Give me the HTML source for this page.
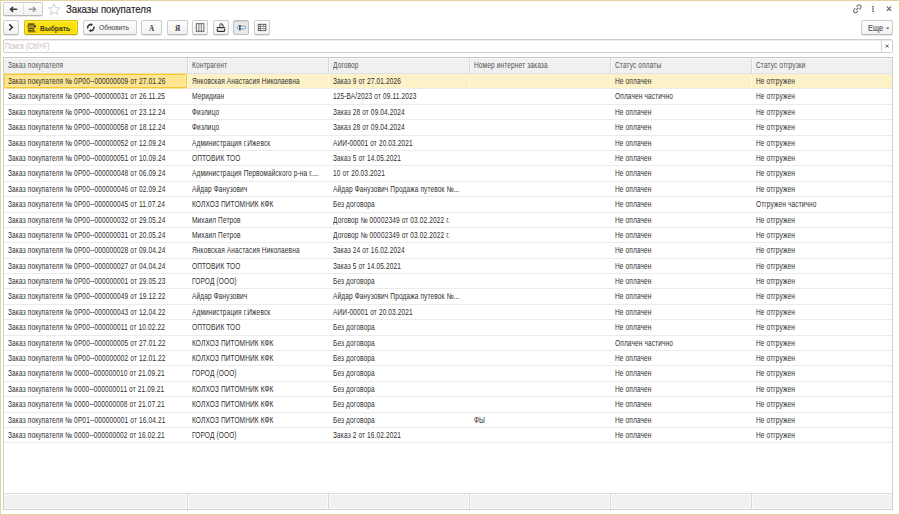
<!DOCTYPE html>
<html><head><meta charset="utf-8"><style>*{margin:0;padding:0;box-sizing:border-box}
html,body{width:900px;height:515px;overflow:hidden;background:#fff}
body{font-family:"Liberation Sans",sans-serif;color:#333;position:relative}
#win{position:absolute;left:0;top:0;width:900px;height:515px;background:#fff}
#frame{position:absolute;left:0;top:0;width:900px;height:515px;border:1px solid #e0d5a0;pointer-events:none}
.abs{position:absolute}
svg{position:absolute;overflow:visible}
.btn{position:absolute;border:1px solid #cdcdcd;border-bottom-color:#b9b9b9;border-radius:2px;background:linear-gradient(#fdfdfd,#f1f1f1);box-shadow:0 1px 0 rgba(0,0,0,0.08)}
.title{position:absolute;left:65.5px;top:1.8px;font-size:10.6px;line-height:14px;color:#222;white-space:nowrap}
.title span{display:inline-block;transform:scaleX(0.91);transform-origin:0 0;-webkit-text-stroke:0.15px currentColor}
.bt{position:absolute;font-size:8.2px;white-space:nowrap;line-height:10px}
.bt span,.ph span{display:inline-block;transform:scaleX(0.83);transform-origin:0 0;-webkit-text-stroke:0.1px currentColor}
#search{position:absolute;left:3px;top:39px;width:890px;height:14px;border:1px solid #cfcfcf;border-radius:2px;background:#fff;box-shadow:inset 0 1px 0 #ececec}
#search .ph{position:absolute;left:1.3px;top:1.5px;font-size:8.2px;color:#d2c4c4;line-height:10px}
#search .ph span{transform:scaleX(0.84)}
#search .x{position:absolute;right:0;top:0;width:11px;height:12px;border-left:1px solid #d5d5d5}
#grid{position:absolute;left:3px;top:57px;width:890px;height:453px;border:1px solid #d0d0d0;border-top-color:#c6c6c6;background:#fff;overflow:hidden}
#hdr{position:absolute;left:0;top:0;width:888px;height:16px;background:#f0f0f0;border-bottom:1px solid #dde3ec;box-shadow:inset 0 1px 0 #fafafa}
.hc{position:absolute;top:0;height:15px;border-left:1px solid #d9d9d9;box-shadow:inset 1px 0 0 #fafafa;font-size:8px;letter-spacing:-0.45px;color:#505050;padding-left:4px;line-height:15px;white-space:nowrap}
.hc:first-child{border-left:none}
.row{position:absolute;left:0;width:888px}
.rl{position:absolute;left:0;width:888px;height:1px;background:#ececec}
.row.sel{background:#fdf1c7}
.c{position:absolute;top:0;height:14px;font-size:8px;letter-spacing:-0.45px;color:#2e2e2e;padding-left:4.8px;line-height:16px;white-space:nowrap;overflow:hidden}
.row.sel .c{box-shadow:inset 1px 0 0 #fff8e2}
.row.sel .c:first-child{box-shadow:none}
#cur{position:absolute;left:0;top:16px;width:183px;height:14px;border:1px solid #fac627;border-radius:1.5px;background:#fde590;box-shadow:0 0 0 0.5px #fbd75a,inset 0 0 0 1px #fde9a4}
#foot{position:absolute;left:0;bottom:0;width:888px;height:16px;background:#f1f1f1;border-top:1px solid #dcdcdc;box-shadow:inset 0 1px 0 #fafafa,inset 0 -1px 0 #fafafa}
.fc{position:absolute;top:0;height:15px;border-left:1px solid #d9d9d9;box-shadow:inset 1px 0 0 #fafafa,-1px 0 0 #fafafa}
.fc:first-child{border-left:none}
#cur{z-index:1}
.c{z-index:2}
.c span,.hc span{display:inline-block;transform:scaleX(0.8);transform-origin:0 0;letter-spacing:0.15px;position:relative;top:0px}
.c,.hc{font-size:8.2px}
.ybtn{background:linear-gradient(#fde31c,#f9db00);border-color:#dcc000 #d8bb00 #c2a600;box-shadow:inset 0 0 0 1px rgba(255,248,110,0.55),0 1px 0 rgba(0,0,0,0.08)}
.pressed{background:#e9e9e9;border-color:#c0c0c0;box-shadow:inset 0 1px 1px rgba(0,0,0,0.12)}
.hc span{top:-0.3px}
.hc:first-child{box-shadow:none}
.hc:first-child span{left:1px}
</style></head>
<body><div id="win"><!-- nav group -->
<div class="btn" style="left:3px;top:2px;width:39.5px;height:14px"></div>
<div class="abs" style="left:22.5px;top:3px;width:1px;height:12px;background:#e2e2e2"></div>
<svg style="left:0;top:0" width="60" height="18" viewBox="0 0 60 18">
  <path d="M10.4 9.3 L12.7 7.2 M10.4 9.3 L12.7 11.4 M10.6 9.3 H16.6" stroke="#3c3c3c" stroke-width="1.5" fill="none" stroke-linecap="round"/>
  <path d="M35.6 9.3 L33.3 7.2 M35.6 9.3 L33.3 11.4 M35.4 9.3 H29.2" stroke="#9a9a9a" stroke-width="1.4" fill="none" stroke-linecap="round"/>
  <path d="M54.2 3.8 L55.8 7.7 L59.9 7.9 L56.7 10.5 L57.8 14.5 L54.2 12.2 L50.6 14.5 L51.7 10.5 L48.5 7.9 L52.6 7.7 Z" stroke="#c5ccd4" stroke-width="0.9" fill="none" stroke-linejoin="round"/>
</svg>
<div class="title"><span>Заказы покупателя</span></div>
<!-- title icons -->
<svg style="left:848px;top:2px" width="48" height="14" viewBox="0 0 48 14">
  <g stroke="#707070" stroke-width="1.1" fill="none" stroke-linecap="round">
    <path d="M-1.3 -1.9 H0 A1.9 1.9 0 0 1 0 1.9 H-1.3" transform="translate(11.2,4.8) rotate(-45)"/>
    <path d="M1.3 -1.9 H0 A1.9 1.9 0 0 0 0 1.9 H1.3" transform="translate(7.4,8.7) rotate(-45)"/>
    <path d="M8.5 7.6 L10.1 6.0"/>
  </g>
  <g fill="#6a6a6a"><rect x="24.2" y="4" width="1.7" height="1.5"/><rect x="24.2" y="6.3" width="1.7" height="1.5"/><rect x="24.2" y="8.6" width="1.7" height="1.5"/></g>
  <path d="M39.2 4.9 L42.8 8.5 M42.8 4.9 L39.2 8.5" stroke="#6a6a6a" stroke-width="1.1" stroke-linecap="round"/>
</svg>
<!-- toolbar -->
<div class="btn" style="left:3px;top:20px;width:16px;height:15px"></div>
<svg style="left:3px;top:20px" width="16" height="15" viewBox="0 0 16 15"><path d="M6.3 4.4 L9.3 7.3 L6.3 10.2" stroke="#2a2a2a" stroke-width="1.5" fill="none"/></svg>
<div class="btn ybtn" style="left:24px;top:20px;width:54px;height:15px"></div>
<svg style="left:24px;top:20px" width="20" height="15" viewBox="0 0 20 15">
  <g fill="#6b5a10"><rect x="4" y="3.2" width="6.5" height="1.7" rx="0.5"/><rect x="3.3" y="5.2" width="7.8" height="2.2" rx="0.6"/><rect x="4" y="7.8" width="6.5" height="1.5"/><rect x="4" y="9.7" width="6.5" height="1.5"/><rect x="4" y="11.3" width="7.5" height="1"/></g>
  <rect x="4.3" y="5.7" width="5.5" height="1.1" fill="#b8a44a"/>
  <rect x="10.3" y="5.3" width="1.7" height="1.9" fill="#2b3a7a"/>
</svg>
<div class="bt" style="left:40px;top:23.6px;font-weight:bold;font-size:7.2px;color:#3d3a1e"><span style="transform:scaleX(0.94);-webkit-text-stroke:0">Выбрать</span></div>
<div class="btn" style="left:83px;top:20px;width:54px;height:15px"></div>
<svg style="left:83px;top:20px" width="16" height="15" viewBox="0 0 16 15">
  <g stroke="#2e2e2e" stroke-width="1.5" fill="none">
    <path d="M8.6 4.5 A3.2 3.2 0 0 0 4.8 8.6"/>
    <path d="M10.9 6.6 A3.2 3.2 0 0 1 7 10.7"/>
  </g>
  <path d="M7.6 3.3 L10 4.5 L8 6.2 Z" fill="#2e2e2e"/>
  <path d="M8 9.2 L5.6 10.4 L7.8 12 Z" fill="#2e2e2e"/>
</svg>
<div class="bt" style="left:98.7px;top:23.4px;color:#555;font-size:7.6px"><span style="transform:scaleX(0.87)">Обновить</span></div>
<div class="btn" style="left:141px;top:20px;width:21px;height:15px"></div>
<div class="abs" style="left:141px;top:20.8px;width:21px;height:15px;font-family:'Liberation Serif',serif;font-weight:bold;font-size:7.2px;text-align:center;line-height:17.2px;color:#3a3a3a">A</div>
<div class="btn" style="left:167px;top:20px;width:21px;height:15px"></div>
<div class="abs" style="left:167px;top:20.8px;width:21px;height:15px;font-family:'Liberation Serif',serif;font-weight:bold;font-size:7.2px;text-align:center;line-height:17.2px;color:#3a3a3a">Я</div>
<div class="btn" style="left:192px;top:20px;width:16px;height:15px"></div>
<svg style="left:192px;top:20px" width="16" height="15" viewBox="0 0 16 15">
  <rect x="4.3" y="3.7" width="7.6" height="7.6" stroke="#5a5a5a" stroke-width="0.9" fill="none"/>
  <path d="M6.9 3.7 V11.3 M9.3 3.7 V11.3" stroke="#5a5a5a" stroke-width="0.8"/>
</svg>
<div class="btn" style="left:213px;top:20px;width:16px;height:15px"></div>
<svg style="left:213px;top:20px" width="16" height="15" viewBox="0 0 16 15">
  <path d="M6.9 6.9 V4.3 Q6.9 3.8 7.4 3.8 H8.9 L10.1 5.0 V6.9" stroke="#3a3a3a" stroke-width="0.9" fill="#fff"/>
  <path d="M8.8 3.9 V5.2 H10.1" stroke="#3a3a3a" stroke-width="0.7" fill="none"/>
  <rect x="3.6" y="6.9" width="8.6" height="1.3" rx="0.5" fill="#333"/>
  <path d="M4.3 8.7 V10.4 Q4.3 11.4 5.2 11.4 H10.7 Q11.6 11.4 11.6 10.4 V8.7" stroke="#333" stroke-width="1.1" fill="none"/>
</svg>
<div class="btn pressed" style="left:233px;top:20px;width:16px;height:15px"></div>
<svg style="left:233px;top:20px" width="16" height="15" viewBox="0 0 16 15">
  <rect x="4.3" y="6.2" width="8.3" height="2.6" rx="1.3" stroke="#5d9fd6" stroke-width="1" fill="#fff"/>
  <path d="M6.9 4.9 V10.6" stroke="#333" stroke-width="1.3"/>
</svg>
<div class="btn" style="left:254px;top:20px;width:16px;height:15px"></div>
<svg style="left:254px;top:20px" width="16" height="15" viewBox="0 0 16 15">
  <rect x="4.3" y="4.3" width="7.5" height="6.3" stroke="#555" stroke-width="0.9" fill="#fff"/>
  <path d="M4.3 6.4 H11.8 M4.3 8.5 H11.8" stroke="#707070" stroke-width="0.8"/>
  <path d="M6.2 4.3 V10.6" stroke="#555" stroke-width="0.9"/>
  <path d="M9.6 4.3 V6.4" stroke="#707070" stroke-width="0.8"/>
  <path d="M9.6 6.4 V10.6" stroke="#aaa" stroke-width="0.6"/>
</svg>
<div class="btn" style="left:861px;top:20px;width:32px;height:15px"></div>
<div class="bt" style="left:868px;top:23.8px;color:#4a4a4a"><span style="transform:scaleX(0.9)">Еще</span></div>
<svg style="left:861px;top:20px" width="32" height="15" viewBox="0 0 32 15"><path d="M25 7.6 H28.4 L26.7 9.3 Z" fill="#555"/></svg>
<div id="search"><span class="ph"><span>Поиск (Ctrl+F)</span></span><span class="x"><svg style="left:-1px;top:0" width="12" height="12" viewBox="0 0 12 12"><path d="M4.6 4.7 L7.6 7.5 M7.6 4.7 L4.6 7.5" stroke="#555" stroke-width="0.9"/></svg></span></div>
<div id="grid"><div id="hdr"><div class="hc" style="left:-1px;width:184px"><span>Заказ покупателя</span></div><div class="hc" style="left:183px;width:141px"><span>Контрагент</span></div><div class="hc" style="left:324px;width:141px"><span>Договор</span></div><div class="hc" style="left:465px;width:141px"><span>Номер интернет заказа</span></div><div class="hc" style="left:606px;width:141px"><span>Статус оплаты</span></div><div class="hc" style="left:747px;width:141px"><span>Статус отгрузки</span></div></div><div class="row sel" style="top:16px;height:14px"><div class="c" style="left:-1px;width:184px"><span>Заказ покупателя № 0Р00--000000009 от 27.01.26</span></div><div class="c" style="left:183px;width:141px"><span>Янковская Анастасия Николаевна</span></div><div class="c" style="left:324px;width:141px"><span>Заказ 9 от 27.01.2026</span></div><div class="c" style="left:465px;width:141px"><span></span></div><div class="c" style="left:606px;width:141px"><span>Не оплачен</span></div><div class="c" style="left:747px;width:141px"><span>Не отгружен</span></div></div><div id="cur"></div><div class="rl" style="top:30px"></div><div class="row" style="top:31px;height:15px"><div class="c" style="left:-1px;width:184px"><span>Заказ покупателя № 0Р00--000000031 от 26.11.25</span></div><div class="c" style="left:183px;width:141px"><span>Меридиан</span></div><div class="c" style="left:324px;width:141px"><span>125-ВА/2023 от 09.11.2023</span></div><div class="c" style="left:465px;width:141px"><span></span></div><div class="c" style="left:606px;width:141px"><span>Оплачен частично</span></div><div class="c" style="left:747px;width:141px"><span>Не отгружен</span></div></div><div class="rl" style="top:46px"></div><div class="row" style="top:47px;height:14px"><div class="c" style="left:-1px;width:184px"><span>Заказ покупателя № 0Р00--000000061 от 23.12.24</span></div><div class="c" style="left:183px;width:141px"><span>Физлицо</span></div><div class="c" style="left:324px;width:141px"><span>Заказ 28 от 09.04.2024</span></div><div class="c" style="left:465px;width:141px"><span></span></div><div class="c" style="left:606px;width:141px"><span>Не оплачен</span></div><div class="c" style="left:747px;width:141px"><span>Не отгружен</span></div></div><div class="rl" style="top:61px"></div><div class="row" style="top:62px;height:15px"><div class="c" style="left:-1px;width:184px"><span>Заказ покупателя № 0Р00--000000058 от 18.12.24</span></div><div class="c" style="left:183px;width:141px"><span>Физлицо</span></div><div class="c" style="left:324px;width:141px"><span>Заказ 28 от 09.04.2024</span></div><div class="c" style="left:465px;width:141px"><span></span></div><div class="c" style="left:606px;width:141px"><span>Не оплачен</span></div><div class="c" style="left:747px;width:141px"><span>Не отгружен</span></div></div><div class="rl" style="top:77px"></div><div class="row" style="top:78px;height:14px"><div class="c" style="left:-1px;width:184px"><span>Заказ покупателя № 0Р00--000000052 от 12.09.24</span></div><div class="c" style="left:183px;width:141px"><span>Администрация г.Ижевск</span></div><div class="c" style="left:324px;width:141px"><span>АИИ-00001 от 20.03.2021</span></div><div class="c" style="left:465px;width:141px"><span></span></div><div class="c" style="left:606px;width:141px"><span>Не оплачен</span></div><div class="c" style="left:747px;width:141px"><span>Не отгружен</span></div></div><div class="rl" style="top:92px"></div><div class="row" style="top:93px;height:14px"><div class="c" style="left:-1px;width:184px"><span>Заказ покупателя № 0Р00--000000051 от 10.09.24</span></div><div class="c" style="left:183px;width:141px"><span>ОПТОВИК ТОО</span></div><div class="c" style="left:324px;width:141px"><span>Заказ 5 от 14.05.2021</span></div><div class="c" style="left:465px;width:141px"><span></span></div><div class="c" style="left:606px;width:141px"><span>Не оплачен</span></div><div class="c" style="left:747px;width:141px"><span>Не отгружен</span></div></div><div class="rl" style="top:107px"></div><div class="row" style="top:108px;height:15px"><div class="c" style="left:-1px;width:184px"><span>Заказ покупателя № 0Р00--000000048 от 06.09.24</span></div><div class="c" style="left:183px;width:141px"><span>Администрация Первомайского р-на г....</span></div><div class="c" style="left:324px;width:141px"><span>10 от 20.03.2021</span></div><div class="c" style="left:465px;width:141px"><span></span></div><div class="c" style="left:606px;width:141px"><span>Не оплачен</span></div><div class="c" style="left:747px;width:141px"><span>Не отгружен</span></div></div><div class="rl" style="top:123px"></div><div class="row" style="top:124px;height:14px"><div class="c" style="left:-1px;width:184px"><span>Заказ покупателя № 0Р00--000000046 от 02.09.24</span></div><div class="c" style="left:183px;width:141px"><span>Айдар Фанузович</span></div><div class="c" style="left:324px;width:141px"><span>Айдар Фанузович Продажа путевок №...</span></div><div class="c" style="left:465px;width:141px"><span></span></div><div class="c" style="left:606px;width:141px"><span>Не оплачен</span></div><div class="c" style="left:747px;width:141px"><span>Не отгружен</span></div></div><div class="rl" style="top:138px"></div><div class="row" style="top:139px;height:15px"><div class="c" style="left:-1px;width:184px"><span>Заказ покупателя № 0Р00--000000045 от 11.07.24</span></div><div class="c" style="left:183px;width:141px"><span>КОЛХОЗ ПИТОМНИК КФК</span></div><div class="c" style="left:324px;width:141px"><span>Без договора</span></div><div class="c" style="left:465px;width:141px"><span></span></div><div class="c" style="left:606px;width:141px"><span>Не оплачен</span></div><div class="c" style="left:747px;width:141px"><span>Отгружен частично</span></div></div><div class="rl" style="top:154px"></div><div class="row" style="top:155px;height:14px"><div class="c" style="left:-1px;width:184px"><span>Заказ покупателя № 0Р00--000000032 от 29.05.24</span></div><div class="c" style="left:183px;width:141px"><span>Михаил Петров</span></div><div class="c" style="left:324px;width:141px"><span>Договор № 00002349 от 03.02.2022 г.</span></div><div class="c" style="left:465px;width:141px"><span></span></div><div class="c" style="left:606px;width:141px"><span>Не оплачен</span></div><div class="c" style="left:747px;width:141px"><span>Не отгружен</span></div></div><div class="rl" style="top:169px"></div><div class="row" style="top:170px;height:14px"><div class="c" style="left:-1px;width:184px"><span>Заказ покупателя № 0Р00--000000031 от 20.05.24</span></div><div class="c" style="left:183px;width:141px"><span>Михаил Петров</span></div><div class="c" style="left:324px;width:141px"><span>Договор № 00002349 от 03.02.2022 г.</span></div><div class="c" style="left:465px;width:141px"><span></span></div><div class="c" style="left:606px;width:141px"><span>Не оплачен</span></div><div class="c" style="left:747px;width:141px"><span>Не отгружен</span></div></div><div class="rl" style="top:184px"></div><div class="row" style="top:185px;height:15px"><div class="c" style="left:-1px;width:184px"><span>Заказ покупателя № 0Р00--000000028 от 09.04.24</span></div><div class="c" style="left:183px;width:141px"><span>Янковская Анастасия Николаевна</span></div><div class="c" style="left:324px;width:141px"><span>Заказ 24 от 16.02.2024</span></div><div class="c" style="left:465px;width:141px"><span></span></div><div class="c" style="left:606px;width:141px"><span>Не оплачен</span></div><div class="c" style="left:747px;width:141px"><span>Не отгружен</span></div></div><div class="rl" style="top:200px"></div><div class="row" style="top:201px;height:14px"><div class="c" style="left:-1px;width:184px"><span>Заказ покупателя № 0Р00--000000027 от 04.04.24</span></div><div class="c" style="left:183px;width:141px"><span>ОПТОВИК ТОО</span></div><div class="c" style="left:324px;width:141px"><span>Заказ 5 от 14.05.2021</span></div><div class="c" style="left:465px;width:141px"><span></span></div><div class="c" style="left:606px;width:141px"><span>Не оплачен</span></div><div class="c" style="left:747px;width:141px"><span>Не отгружен</span></div></div><div class="rl" style="top:215px"></div><div class="row" style="top:216px;height:14px"><div class="c" style="left:-1px;width:184px"><span>Заказ покупателя № 0Р00--000000001 от 29.05.23</span></div><div class="c" style="left:183px;width:141px"><span>ГОРОД (ООО)</span></div><div class="c" style="left:324px;width:141px"><span>Без договора</span></div><div class="c" style="left:465px;width:141px"><span></span></div><div class="c" style="left:606px;width:141px"><span>Не оплачен</span></div><div class="c" style="left:747px;width:141px"><span>Не отгружен</span></div></div><div class="rl" style="top:230px"></div><div class="row" style="top:231px;height:15px"><div class="c" style="left:-1px;width:184px"><span>Заказ покупателя № 0Р00--000000049 от 19.12.22</span></div><div class="c" style="left:183px;width:141px"><span>Айдар Фанузович</span></div><div class="c" style="left:324px;width:141px"><span>Айдар Фанузович Продажа путевок №...</span></div><div class="c" style="left:465px;width:141px"><span></span></div><div class="c" style="left:606px;width:141px"><span>Не оплачен</span></div><div class="c" style="left:747px;width:141px"><span>Не отгружен</span></div></div><div class="rl" style="top:246px"></div><div class="row" style="top:247px;height:14px"><div class="c" style="left:-1px;width:184px"><span>Заказ покупателя № 0Р00--000000043 от 12.04.22</span></div><div class="c" style="left:183px;width:141px"><span>Администрация г.Ижевск</span></div><div class="c" style="left:324px;width:141px"><span>АИИ-00001 от 20.03.2021</span></div><div class="c" style="left:465px;width:141px"><span></span></div><div class="c" style="left:606px;width:141px"><span>Не оплачен</span></div><div class="c" style="left:747px;width:141px"><span>Не отгружен</span></div></div><div class="rl" style="top:261px"></div><div class="row" style="top:262px;height:15px"><div class="c" style="left:-1px;width:184px"><span>Заказ покупателя № 0Р00--000000011 от 10.02.22</span></div><div class="c" style="left:183px;width:141px"><span>ОПТОВИК ТОО</span></div><div class="c" style="left:324px;width:141px"><span>Без договора</span></div><div class="c" style="left:465px;width:141px"><span></span></div><div class="c" style="left:606px;width:141px"><span>Не оплачен</span></div><div class="c" style="left:747px;width:141px"><span>Не отгружен</span></div></div><div class="rl" style="top:277px"></div><div class="row" style="top:278px;height:14px"><div class="c" style="left:-1px;width:184px"><span>Заказ покупателя № 0Р00--000000005 от 27.01.22</span></div><div class="c" style="left:183px;width:141px"><span>КОЛХОЗ ПИТОМНИК КФК</span></div><div class="c" style="left:324px;width:141px"><span>Без договора</span></div><div class="c" style="left:465px;width:141px"><span></span></div><div class="c" style="left:606px;width:141px"><span>Оплачен частично</span></div><div class="c" style="left:747px;width:141px"><span>Не отгружен</span></div></div><div class="rl" style="top:292px"></div><div class="row" style="top:293px;height:14px"><div class="c" style="left:-1px;width:184px"><span>Заказ покупателя № 0Р00--000000002 от 12.01.22</span></div><div class="c" style="left:183px;width:141px"><span>КОЛХОЗ ПИТОМНИК КФК</span></div><div class="c" style="left:324px;width:141px"><span>Без договора</span></div><div class="c" style="left:465px;width:141px"><span></span></div><div class="c" style="left:606px;width:141px"><span>Не оплачен</span></div><div class="c" style="left:747px;width:141px"><span>Не отгружен</span></div></div><div class="rl" style="top:307px"></div><div class="row" style="top:308px;height:15px"><div class="c" style="left:-1px;width:184px"><span>Заказ покупателя № 0000--000000010 от 21.09.21</span></div><div class="c" style="left:183px;width:141px"><span>ГОРОД (ООО)</span></div><div class="c" style="left:324px;width:141px"><span>Без договора</span></div><div class="c" style="left:465px;width:141px"><span></span></div><div class="c" style="left:606px;width:141px"><span>Не оплачен</span></div><div class="c" style="left:747px;width:141px"><span>Не отгружен</span></div></div><div class="rl" style="top:323px"></div><div class="row" style="top:324px;height:14px"><div class="c" style="left:-1px;width:184px"><span>Заказ покупателя № 0000--000000011 от 21.09.21</span></div><div class="c" style="left:183px;width:141px"><span>КОЛХОЗ ПИТОМНИК КФК</span></div><div class="c" style="left:324px;width:141px"><span>Без договора</span></div><div class="c" style="left:465px;width:141px"><span></span></div><div class="c" style="left:606px;width:141px"><span>Не оплачен</span></div><div class="c" style="left:747px;width:141px"><span>Не отгружен</span></div></div><div class="rl" style="top:338px"></div><div class="row" style="top:339px;height:15px"><div class="c" style="left:-1px;width:184px"><span>Заказ покупателя № 0000--000000008 от 21.07.21</span></div><div class="c" style="left:183px;width:141px"><span>КОЛХОЗ ПИТОМНИК КФК</span></div><div class="c" style="left:324px;width:141px"><span>Без договора</span></div><div class="c" style="left:465px;width:141px"><span></span></div><div class="c" style="left:606px;width:141px"><span>Не оплачен</span></div><div class="c" style="left:747px;width:141px"><span>Не отгружен</span></div></div><div class="rl" style="top:354px"></div><div class="row" style="top:355px;height:14px"><div class="c" style="left:-1px;width:184px"><span>Заказ покупателя № 0Р01--000000001 от 16.04.21</span></div><div class="c" style="left:183px;width:141px"><span>КОЛХОЗ ПИТОМНИК КФК</span></div><div class="c" style="left:324px;width:141px"><span>Без договора</span></div><div class="c" style="left:465px;width:141px"><span>ФЫ</span></div><div class="c" style="left:606px;width:141px"><span>Не оплачен</span></div><div class="c" style="left:747px;width:141px"><span>Не отгружен</span></div></div><div class="rl" style="top:369px"></div><div class="row" style="top:370px;height:14px"><div class="c" style="left:-1px;width:184px"><span>Заказ покупателя № 0000--000000002 от 16.02.21</span></div><div class="c" style="left:183px;width:141px"><span>ГОРОД (ООО)</span></div><div class="c" style="left:324px;width:141px"><span>Заказ 2 от 16.02.2021</span></div><div class="c" style="left:465px;width:141px"><span></span></div><div class="c" style="left:606px;width:141px"><span>Не оплачен</span></div><div class="c" style="left:747px;width:141px"><span>Не отгружен</span></div></div><div class="rl" style="top:384px"></div><div id="foot"><div class="fc" style="left:-1px;width:184px"></div><div class="fc" style="left:183px;width:141px"></div><div class="fc" style="left:324px;width:141px"></div><div class="fc" style="left:465px;width:141px"></div><div class="fc" style="left:606px;width:141px"></div><div class="fc" style="left:747px;width:141px"></div></div></div><div id="frame"></div></div></body></html>
